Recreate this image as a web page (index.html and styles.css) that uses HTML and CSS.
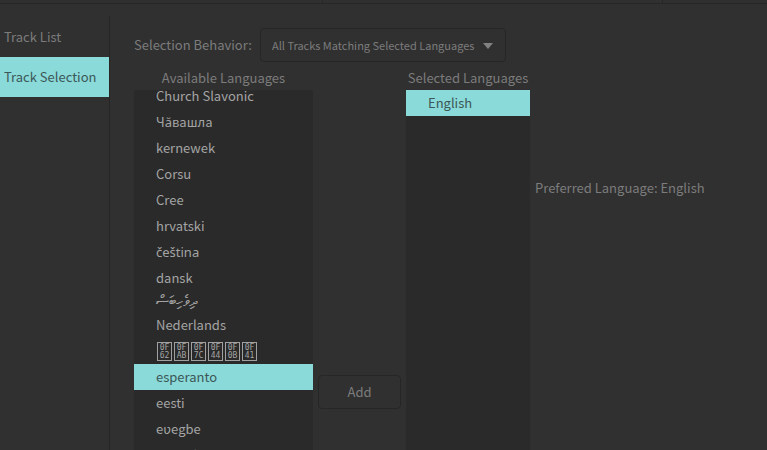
FILE: index.html
```html
<!DOCTYPE html>
<html lang="en">
<head>
<meta charset="utf-8">
<title>Track Selection</title>
<link rel="stylesheet" href="styles.css">
</head>
<body>
<header class="topbar">
  <span class="topbar-cell"></span><span class="topbar-cell"></span><span class="topbar-cell"></span>
</header>
<div class="layout">
  <nav class="sidebar">
    <a class="tab" href="#list">Track List</a>
    <a class="tab tab-active" href="#selection" aria-current="page">Track Selection</a>
  </nav>
  <main class="content">
    <div class="behavior">
      <label class="behavior-label" for="behavior">Selection Behavior:</label>
      <div class="combo">
        <select class="combo-select" id="behavior"><option>All Tracks Matching Selected Languages</option></select>
        <svg class="combo-arrow" viewBox="0 0 10 6" aria-hidden="true"><path d="M0 0h10L5 6z"/></svg>
      </div>
    </div>
    <div class="languages">
      <section class="available">
        <h2 class="title">Available Languages</h2>
        <ul class="list list-scrolled">
          <li class="item">Church Slavonic</li>
          <li class="item">Чӑвашла</li>
          <li class="item">kernewek</li>
          <li class="item">Corsu</li>
          <li class="item">Cree</li>
          <li class="item">hrvatski</li>
          <li class="item item-accented" lang="cs">čeština</li>
          <li class="item">dansk</li>
          <li class="item item-thaana" lang="dv">ދިވެހިބަސް</li>
          <li class="item">Nederlands</li>
          <li class="item item-codes">
            <span class="code">0F<br>62</span><span class="code">0F<br>AB</span><span class="code">0F<br>7C</span><span class="code">0F<br>44</span><span class="code">0F<br>0B</span><span class="code">0F<br>41</span>
          </li>
          <li class="item item-selected">esperanto</li>
          <li class="item">eesti</li>
          <li class="item">eʋegbe</li>
          <li class="item">føroyskt</li>
        </ul>
      </section>
      <div class="actions"><button class="add" type="button">Add</button></div>
      <section class="selected">
        <h2 class="title">Selected Languages</h2>
        <ul class="list">
          <li class="item item-selected">English</li>
        </ul>
      </section>
      <p class="preferred">Preferred Language: English</p>
    </div>
  </main>
</div>
</body>
</html>
```
FILE: styles.css
```css
* { box-sizing: border-box; }

body {
  margin: 0;
  height: 100vh;
  display: flex;
  flex-direction: column;
  overflow: hidden;
  background: #303030;
  color: #7c7c7c;
  font: 13px/26px "Noto Sans CJK SC", "Noto Sans", sans-serif;
}

.topbar {
  display: grid;
  grid-template-columns: 323px 340px 1fr;
  flex: none;
  height: 4px;
  border-bottom: 1px solid #262626;
}
.topbar-cell { border-right: 1px solid #262626; }
.topbar-cell:last-child { border-right: 0; }

.layout { display: flex; flex: 1; min-height: 0; padding-top: 12px; }

.sidebar {
  flex: none;
  width: 110px;
  border-right: 1px solid #262626;
}
.tab {
  display: block;
  padding: 0 4px;
  color: inherit;
  line-height: 41px;
  text-decoration: none;
  white-space: nowrap;
}
.tab-active { background: #8adad9; color: #3c5757; line-height: 40px; }

.content {
  display: flex;
  flex-direction: column;
  flex: 1;
  min-width: 0;
  padding: 12px 0 0 24px;
}

.behavior { display: flex; align-items: center; flex: none; }
.behavior-label { width: 126px; white-space: nowrap; }
.combo { position: relative; }
.combo-select {
  appearance: none;
  display: block;
  height: 34px;
  padding: 0 30px 0 11px;
  border: 1px solid #262626;
  border-radius: 4px;
  background: #303030;
  color: inherit;
  font: 11px/32px "Noto Sans CJK SC", sans-serif;
}
.combo-arrow {
  position: absolute;
  top: 15px;
  right: 13px;
  width: 10px;
  height: 6px;
  fill: #828282;
}

.languages { display: flex; flex: 1; min-height: 0; padding-top: 4px; }
.title { flex: none; margin: 0; font-size: inherit; font-weight: 400; line-height: 24px; text-align: center; white-space: nowrap; }
.available, .selected { display: flex; flex-direction: column; flex: none; }
.available { width: 179px; }
.selected { width: 124px; }

.list {
  flex: 1;
  min-height: 0;
  margin: 0;
  padding: 0;
  overflow: hidden;
  list-style: none;
  background: #2a2a2a;
  color: #a4a4a4;
}
.list-scrolled .item:first-child { margin-top: -7px; }
.item { height: 26px; padding: 0 22px; white-space: nowrap; }
.item-selected { background: #8adad9; color: #3c5757; }
.item-accented { font-family: "Noto Sans", sans-serif; }
.item-thaana { height: 21px; font-size: 15px; line-height: 18px; }
.item-codes { display: flex; align-items: center; gap: 2px; padding: 0 23px; }
.code {
  width: 15px;
  height: 19px;
  padding-top: 1px;
  border: 1px solid #a0a0a0;
  font: 8px/8px "DejaVu Sans Mono", monospace;
  text-align: center;
}

.actions { flex: none; width: 93px; padding: 309px 5px 0; }
.add {
  display: block;
  width: 100%;
  height: 34px;
  padding: 0;
  border: 1px solid #262626;
  border-radius: 4px;
  background: #303030;
  color: inherit;
  font: inherit;
}

.preferred { margin: 0; padding: 109px 0 0 5px; white-space: nowrap; }
```
